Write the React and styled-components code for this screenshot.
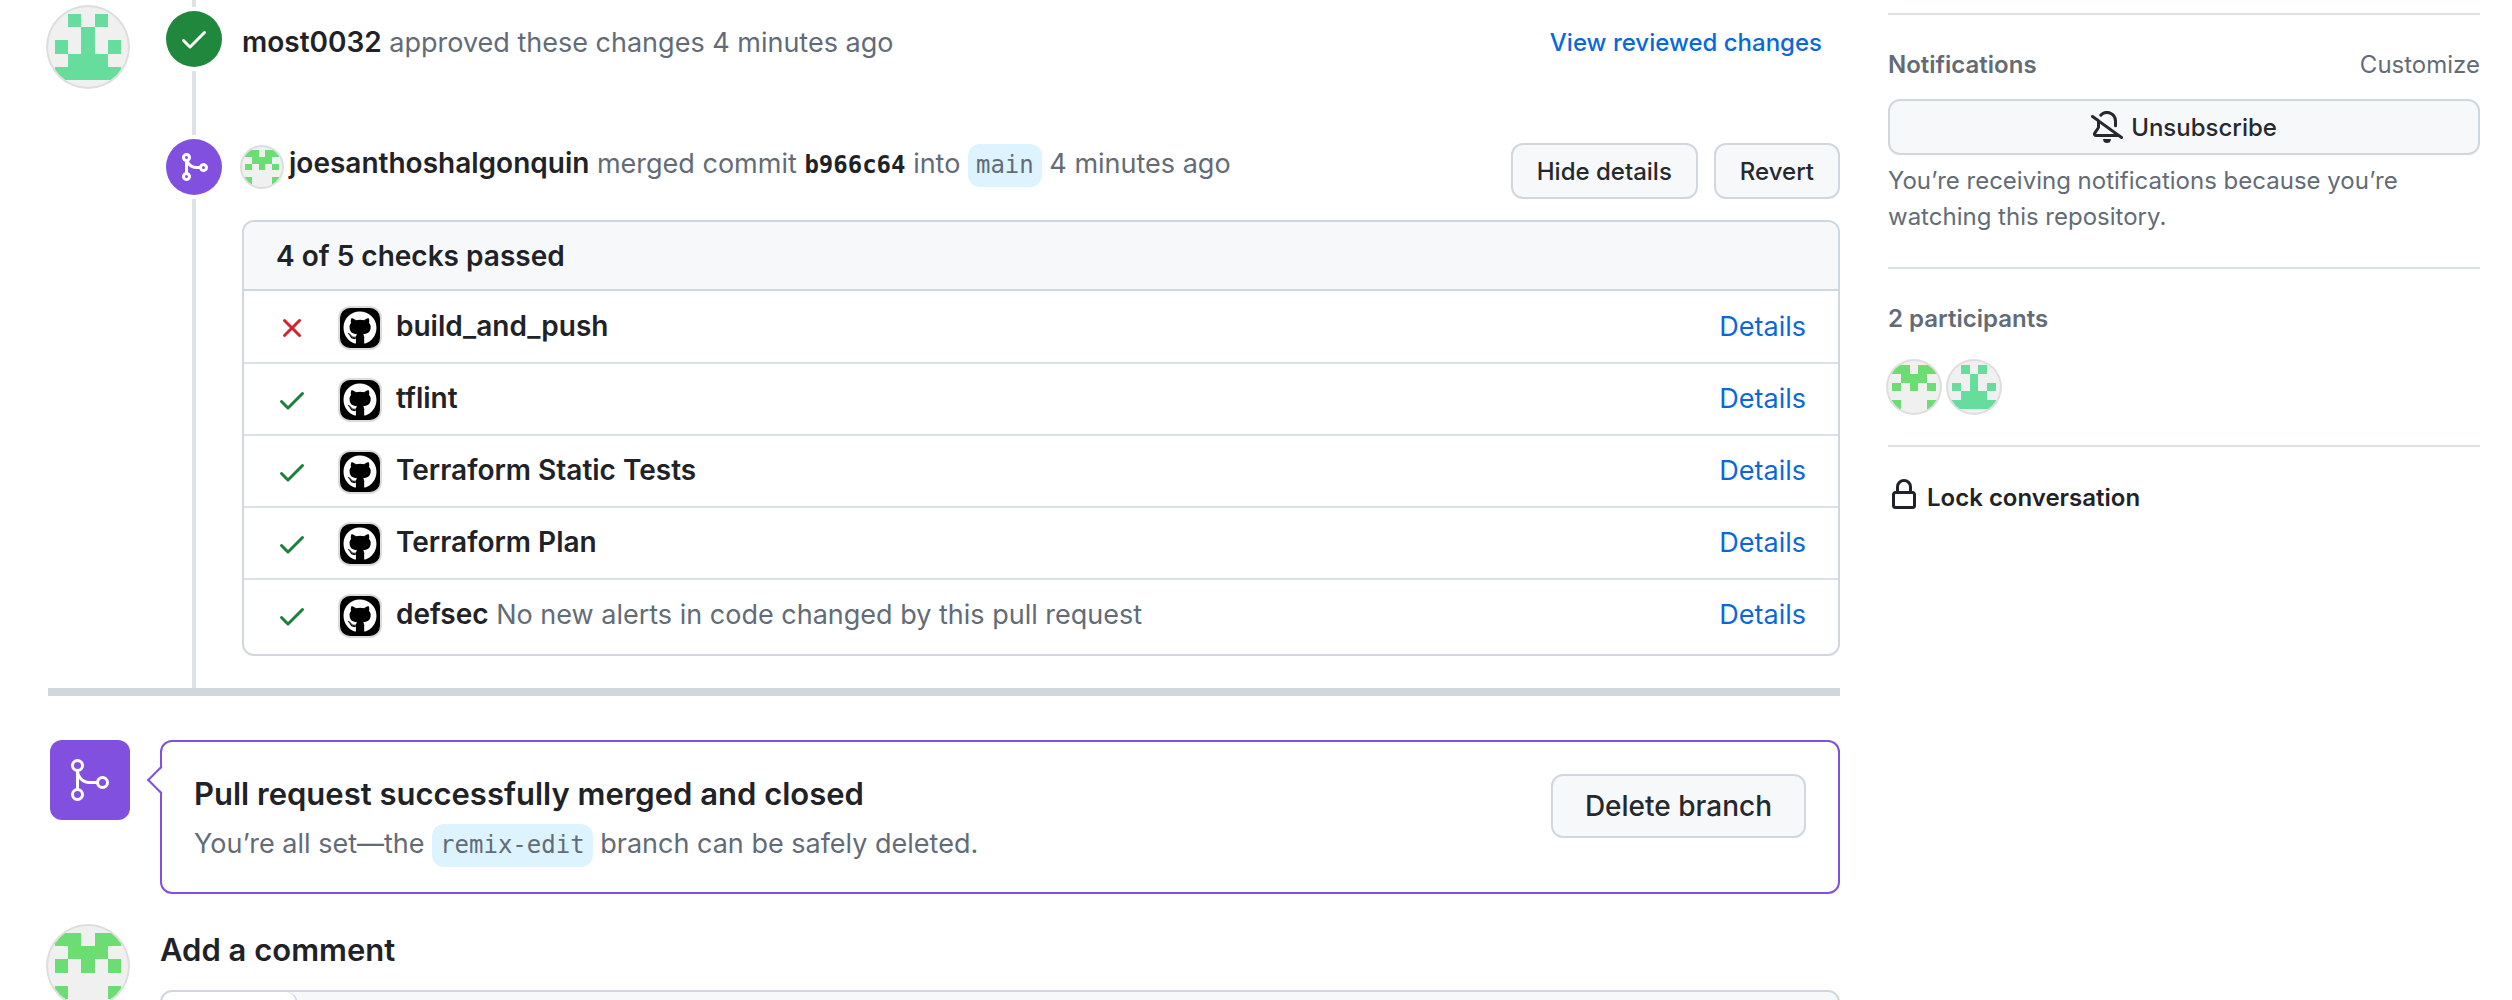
import React from "react";
import styled, { createGlobalStyle } from "styled-components";
import { GoGitMerge } from "react-icons/go";
import { FaGithub } from "react-icons/fa";

const color = {
  fg: "#1f2328",
  muted: "#636c76",
  link: "#0969da",
  border: "#d0d7de",
  borderMuted: "#dde2e7",
  subtle: "#f6f8fa",
  done: "#8250df",
  success: "#1a7f37",
  successBadge: "#1f883d",
  danger: "#d1242f",
  branch: "#ddf4ff",
};

const sans = `Inter, "Liberation Sans", sans-serif`;
const mono = `"DejaVu Sans Mono", "Liberation Mono", monospace`;

const GlobalStyle = createGlobalStyle`
  *, *::before, *::after { box-sizing: border-box; }
  body {
    margin: 0;
    background: #fff;
    color: ${color.fg};
    font-family: ${sans};
    font-size: 27px;
    line-height: 42px;
  }
  h2, h3, p, ul { margin: 0; padding: 0; }
  a { color: inherit; text-decoration: none; }
`;

/* ---------- icons ---------- */

const paths = {
  check:
    "M13.78 4.22a.75.75 0 0 1 0 1.06l-7.25 7.25a.75.75 0 0 1-1.06 0L2.22 9.28a.751.751 0 0 1 .018-1.042.751.751 0 0 1 1.042-.018L6 10.94l6.72-6.72a.75.75 0 0 1 1.06 0Z",
  x: "M3.72 3.72a.75.75 0 0 1 1.06 0L8 6.94l3.22-3.22a.749.749 0 0 1 1.275.326.749.749 0 0 1-.215.734L9.06 8l3.22 3.22a.749.749 0 0 1-.326 1.275.749.749 0 0 1-.734-.215L8 9.06l-3.22 3.22a.751.751 0 0 1-1.042-.018.751.751 0 0 1-.018-1.042L6.94 8 3.72 4.78a.75.75 0 0 1 0-1.06Z",
  merge:
    "M5.45 5.154A4.25 4.25 0 0 0 9.25 7.5h1.378a2.251 2.251 0 1 1 0 1.5H9.25A5.734 5.734 0 0 1 5 7.123v3.505a2.25 2.25 0 1 1-1.5 0V5.372a2.25 2.25 0 1 1 1.95-.218ZM4.25 13.5a.75.75 0 1 0 0-1.5.75.75 0 0 0 0 1.5Zm8.5-4.5a.75.75 0 1 0 0-1.5.75.75 0 0 0 0 1.5ZM5 3.25a.75.75 0 1 0 0 .005V3.25Z",
  bellSlash:
    "m4.182 4.31.016.011 10.104 7.316.013.01 1.375.996a.75.75 0 1 1-.88 1.214L13.626 13H2.518a1.516 1.516 0 0 1-1.263-2.36l1.703-2.554A.255.255 0 0 0 3 7.947V5.305L.31 3.357a.75.75 0 1 1 .88-1.214Zm7.373 7.19L4.5 6.391v1.556c0 .346-.102.683-.294.97l-1.703 2.556a.017.017 0 0 0-.003.01c0 .005.002.009.005.012l.006.004.007.001ZM8 1.5c-.997 0-1.895.416-2.534 1.086A.75.75 0 1 1 4.38 1.55 5 5 0 0 1 13 5v2.373a.75.75 0 0 1-1.5 0V5A3.5 3.5 0 0 0 8 1.5ZM8 16a2 2 0 0 1-1.985-1.75c-.017-.137.097-.25.235-.25h3.5c.138 0 .252.113.235.25A2 2 0 0 1 8 16Z",
  lock: "M4 4a4 4 0 0 1 8 0v2h.25c.966 0 1.75.784 1.75 1.75v5.5A1.75 1.75 0 0 1 12.25 15h-8.5A1.75 1.75 0 0 1 2 13.25v-5.5C2 6.784 2.784 6 3.75 6H4Zm8.25 3.5h-8.5a.25.25 0 0 0-.25.25v5.5c0 .138.112.25.25.25h8.5a.25.25 0 0 0 .25-.25v-5.5a.25.25 0 0 0-.25-.25ZM10.5 6V4a2.5 2.5 0 1 0-5 0v2Z",
};

const Svg = styled.svg`
  flex: none;
  display: block;
  fill: currentColor;
`;

const Icon = ({ name }) => (
  <Svg width="32" height="32" viewBox="0 0 16 16" aria-hidden="true">
    <path d={paths[name]} />
  </Svg>
);

/* ---------- identicon avatars ---------- */

const people = {
  most0032: { fill: "#66dd9c", rows: [".#.#.", "..#..", "#.#.#", ".###.", "#####"] },
  joe: { fill: "#6bdd73", rows: ["##.##", ".###.", "#.#.#", ".....", "#...#"] },
};

const AvatarFrame = styled.a`
  flex: none;
  display: block;
  width: ${(p) => p.$size}px;
  height: ${(p) => p.$size}px;
  border-radius: 50%;
  background: #f0f0f0;
  box-shadow: 0 0 0 2px #dedede;
  overflow: hidden;
`;

const Avatar = ({ who, size }) => {
  const { fill, rows } = people[who];
  return (
    <AvatarFrame href="#" $size={size} aria-label={who}>
      <Svg width={size} height={size} viewBox="0 0 12 12" shapeRendering="crispEdges">
        {rows.flatMap((row, y) =>
          [...row].map((c, x) =>
            c === "#" ? (
              <rect key={`${x}-${y}`} x={1 + x * 2} y={1 + y * 2} width="2" height="2" fill={fill} />
            ) : null
          )
        )}
      </Svg>
    </AvatarFrame>
  );
};

/* ---------- page ---------- */

const Page = styled.div`
  display: flex;
  align-items: flex-start;
  gap: 48px;
  height: 100vh;
  padding: 0 32px 0 48px;
  overflow: hidden;
`;

const Main = styled.main`
  flex: 1;
  min-width: 0;
`;

const Button = styled.button`
  display: ${(p) => (p.$block ? "flex" : "block")};
  align-items: center;
  justify-content: center;
  gap: 8px;
  width: ${(p) => (p.$block ? "100%" : "auto")};
  height: ${(p) => (p.$large ? 64 : 56)}px;
  padding: 0 ${(p) => (p.$large ? 32 : 24)}px;
  border: 2px solid ${color.border};
  border-radius: 12px;
  background: ${color.subtle};
  color: #25292e;
  font-family: ${sans};
  font-size: ${(p) => (p.$large ? 28 : 24)}px;
  font-weight: 500;
  white-space: nowrap;
  cursor: pointer;
`;

/* ---------- timeline ---------- */

const TimelineItem = styled.div`
  display: flex;
  align-items: stretch;
`;

const AvatarSlot = styled.div`
  flex: none;
  width: 114px;
  padding-top: 7px;
`;

const Rail = styled.div`
  flex: none;
  display: flex;
  flex-direction: column;
  align-items: center;
  width: 64px;
  margin-right: 16px;
`;

const RailLine = styled.div`
  width: 4px;
  background: ${color.borderMuted};
  ${(p) => (p.$lead ? "height: 7px;" : "flex: 1;")}
`;

const Badge = styled.div`
  flex: none;
  display: flex;
  align-items: center;
  justify-content: center;
  width: 56px;
  height: 56px;
  margin: 4px 0;
  border-radius: 50%;
  background: ${(p) => p.$bg};
  color: #fff;
`;

const ReviewEvent = styled.div`
  flex: 1;
  display: flex;
  justify-content: space-between;
  padding: 22px 18px 71px 0;
`;

const MergeEvent = styled.div`
  flex: 1;
  min-width: 0;
  padding: 8px 0 32px;
`;

const EventHead = styled.div`
  display: flex;
  align-items: flex-start;
  gap: 7px;
  margin-bottom: 21px;
`;

const EventAvatar = styled.div`
  padding-top: 4px;
`;

const EventText = styled.div`
  flex: 1;
  color: ${color.muted};
`;

const Author = styled.a`
  color: ${color.fg};
  font-size: 28px;
  font-weight: 600;
  line-height: 28px;
`;

const Commit = styled.a`
  color: ${color.fg};
  font-family: ${mono};
  font-size: 24px;
  font-weight: 700;
  line-height: 24px;
`;

const Branch = styled.a`
  padding: 7px 8px 8px;
  border-radius: 12px;
  background: ${color.branch};
  color: ${color.muted};
  font-family: ${mono};
  font-size: 24px;
  line-height: 24px;
`;

const ReviewLink = styled.a`
  color: ${color.link};
  font-size: 24px;
  font-weight: 500;
`;

const ButtonGroup = styled.div`
  display: flex;
  gap: 16px;
`;

/* ---------- checks ---------- */

const Checks = styled.section`
  border: 2px solid ${color.border};
  border-radius: 12px;
  overflow: hidden;
`;

const ChecksTitle = styled.h3`
  padding: 13px 32px 12px;
  border-bottom: 2px solid ${color.border};
  background: ${color.subtle};
  font-size: 28px;
  font-weight: 600;
`;

const CheckList = styled.ul`
  padding: 1px 0 2px;
  list-style: none;
`;

const CheckRow = styled.li`
  display: flex;
  align-items: center;
  height: 72px;
  padding: 0 32px;
  border-bottom: 2px solid ${color.borderMuted};
  &:last-child {
    border-bottom-color: transparent;
  }
`;

const CheckState = styled.span`
  margin-right: 32px;
  padding-top: 2px;
  color: ${(p) => (p.$ok ? color.success : color.danger)};
`;

const AppIcon = styled.span`
  display: flex;
  align-items: center;
  justify-content: center;
  width: 40px;
  height: 40px;
  margin: 2px 16px 0 0;
  border-radius: 10px;
  background: #000;
  box-shadow: 0 0 0 2px #dcdcdc;
  color: #fff;
`;

const CheckText = styled.span`
  flex: 1;
  color: ${color.muted};
`;

const CheckName = styled.strong`
  color: ${color.fg};
  font-size: 28px;
  font-weight: 600;
  line-height: 28px;
`;

const DetailsLink = styled.a`
  color: ${color.link};
`;

const checks = [
  { name: "build_and_push", ok: false },
  { name: "tflint", ok: true },
  { name: "Terraform Static Tests", ok: true },
  { name: "Terraform Plan", ok: true },
  { name: "defsec", ok: true, note: "No new alerts in code changed by this pull request" },
];

/* ---------- merged notice and comment form ---------- */

const Divider = styled.div`
  height: 8px;
  margin-bottom: 44px;
  background: ${color.border};
`;

const SideBySide = styled.section`
  display: flex;
  align-items: flex-start;
`;

const LeadSlot = styled.div`
  flex: none;
  width: 112px;
  padding: ${(p) => p.$pad};
`;

const MergeTile = styled.div`
  display: flex;
  align-items: center;
  justify-content: center;
  width: 80px;
  height: 80px;
  border-radius: 12px;
  background: ${color.done};
  color: #fff;
`;

const MergedCard = styled.div`
  position: relative;
  flex: 1;
  display: flex;
  justify-content: space-between;
  align-items: flex-start;
  padding: 32px 32px 26px;
  margin-bottom: 30px;
  border: 2px solid ${color.done};
  border-radius: 12px;
  &::before {
    content: "";
    position: absolute;
    left: -11px;
    top: 28px;
    width: 20px;
    height: 20px;
    border: solid ${color.done};
    border-width: 0 0 2px 2px;
    background: linear-gradient(45deg, #fff 50%, transparent 50%);
    transform: rotate(45deg);
  }
`;

const Heading = styled.h2`
  margin-bottom: ${(p) => p.$gap}px;
  font-size: 31px;
  font-weight: 600;
  line-height: 40px;
`;

const MergedText = styled.p`
  color: ${color.muted};
  line-height: 44px;
`;

const CommentArea = styled.div`
  flex: 1;
  padding-top: 6px;
`;

const Editor = styled.div`
  height: 96px;
  border: 2px solid ${color.border};
  border-radius: 12px;
  background: ${color.subtle};
`;

const EditorTab = styled.button`
  display: block;
  width: 136px;
  height: 80px;
  padding: 0;
  border: 0;
  border-right: 2px solid ${color.border};
  border-radius: 12px 12px 0 0;
  background: #fff;
`;

/* ---------- sidebar ---------- */

const Sidebar = styled.aside`
  flex: none;
  width: 592px;
  padding-top: 13px;
  color: ${color.muted};
  font-size: 24px;
  line-height: 36px;
`;

const SideSection = styled.section`
  padding: 32px 0;
  border-top: 2px solid ${color.borderMuted};
`;

const SideHead = styled.div`
  display: flex;
  justify-content: space-between;
  margin-bottom: ${(p) => p.$gap}px;
`;

const SideTitle = styled.h3`
  font-size: 24px;
  font-weight: 600;
`;

const SideNote = styled.p`
  padding-top: 8px;
`;

const AvatarRow = styled.div`
  display: flex;
  gap: 8px;
`;

const LockButton = styled.button`
  display: flex;
  align-items: center;
  gap: 7px;
  padding: 0;
  border: 0;
  background: none;
  color: ${color.fg};
  font-family: ${sans};
  font-size: 24px;
  font-weight: 600;
  line-height: 36px;
`;

const LockIcon = styled.span`
  padding-bottom: 6px;
`;

export default function App() {
  return (
    <>
      <GlobalStyle />
      <Page>
        <Main>
          <TimelineItem>
            <AvatarSlot>
              <Avatar who="most0032" size={80} />
            </AvatarSlot>
            <Rail>
              <RailLine $lead />
              <Badge $bg={color.successBadge}>
                <Icon name="check" />
              </Badge>
              <RailLine />
            </Rail>
            <ReviewEvent>
              <EventText>
                <Author href="#">most0032</Author> approved these changes 4 minutes ago
              </EventText>
              <ReviewLink href="#">View reviewed changes</ReviewLink>
            </ReviewEvent>
          </TimelineItem>

          <TimelineItem>
            <AvatarSlot />
            <Rail>
              <Badge $bg={color.done}>
                <Icon name="merge" />
              </Badge>
              <RailLine />
            </Rail>
            <MergeEvent>
              <EventHead>
                <EventAvatar>
                  <Avatar who="joe" size={40} />
                </EventAvatar>
                <EventText>
                  <Author href="#">joesanthoshalgonquin</Author> merged commit{" "}
                  <Commit href="#">b966c64</Commit> into <Branch href="#">main</Branch> 4 minutes ago
                </EventText>
                <ButtonGroup>
                  <Button type="button">Hide details</Button>
                  <Button type="button">Revert</Button>
                </ButtonGroup>
              </EventHead>
              <Checks>
                <ChecksTitle>4 of 5 checks passed</ChecksTitle>
                <CheckList>
                  {checks.map((c) => (
                    <CheckRow key={c.name}>
                      <CheckState $ok={c.ok}>
                        <Icon name={c.ok ? "check" : "x"} />
                      </CheckState>
                      <AppIcon>
                        <FaGithub size={34} />
                      </AppIcon>
                      <CheckText>
                        <CheckName>{c.name}</CheckName> {c.note}
                      </CheckText>
                      <DetailsLink href="#">Details</DetailsLink>
                    </CheckRow>
                  ))}
                </CheckList>
              </Checks>
            </MergeEvent>
          </TimelineItem>

          <Divider />

          <SideBySide>
            <LeadSlot $pad="0 0 0 2px">
              <MergeTile>
                <GoGitMerge size={48} />
              </MergeTile>
            </LeadSlot>
            <MergedCard>
              <div>
                <Heading $gap={8}>Pull request successfully merged and closed</Heading>
                <MergedText>
                  You’re all set—the <Branch as="span">remix-edit</Branch> branch can be safely deleted.
                </MergedText>
              </div>
              <Button type="button" $large>
                Delete branch
              </Button>
            </MergedCard>
          </SideBySide>

          <SideBySide>
            <LeadSlot $pad="2px 0 0">
              <Avatar who="joe" size={80} />
            </LeadSlot>
            <CommentArea>
              <Heading $gap={20}>Add a comment</Heading>
              <Editor>
                <EditorTab type="button" aria-label="Write" />
              </Editor>
            </CommentArea>
          </SideBySide>
        </Main>

        <Sidebar>
          <SideSection>
            <SideHead $gap={16}>
              <SideTitle>Notifications</SideTitle>
              <a href="#">Customize</a>
            </SideHead>
            <Button type="button" $block>
              <Icon name="bellSlash" />
              Unsubscribe
            </Button>
            <SideNote>You’re receiving notifications because you’re watching this repository.</SideNote>
          </SideSection>
          <SideSection>
            <SideHead $gap={24}>
              <SideTitle>2 participants</SideTitle>
            </SideHead>
            <AvatarRow>
              <Avatar who="joe" size={52} />
              <Avatar who="most0032" size={52} />
            </AvatarRow>
          </SideSection>
          <SideSection>
            <LockButton type="button">
              <LockIcon>
                <Icon name="lock" />
              </LockIcon>
              Lock conversation
            </LockButton>
          </SideSection>
        </Sidebar>
      </Page>
    </>
  );
}
